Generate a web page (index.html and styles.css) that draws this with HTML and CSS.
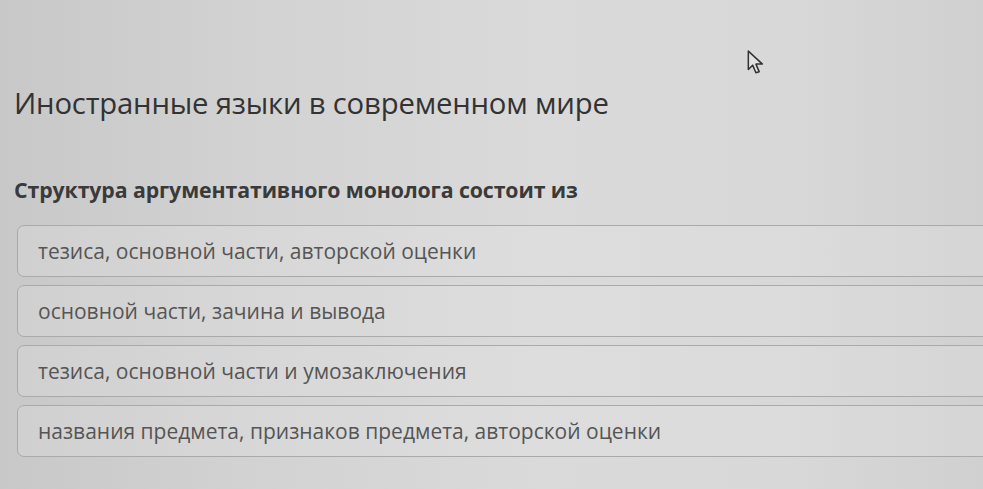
FILE: index.html
```html
<!DOCTYPE html>
<html lang="ru">
<head>
<meta charset="utf-8">
<link rel="stylesheet" href="styles.css">
</head>
<body>
<div class="page">
  <h1 class="title">Иностранные языки в современном мире</h1>
  <h2 class="question">Структура аргументативного монолога состоит из</h2>
  <div class="options">
    <div class="option">тезиса, основной части, авторской оценки</div>
    <div class="option">основной части, зачина и вывода</div>
    <div class="option">тезиса, основной части и умозаключения</div>
    <div class="option">названия предмета, признаков предмета, авторской оценки</div>
  </div>
</div>
<svg class="cursor" width="22" height="26" viewBox="0 0 20 24">
  <path d="M2 1 L2 18 L6 14 L9 21 L12 20 L9 13 L15 13 Z" fill="#e2e2e2" stroke="#333" stroke-width="1.4" stroke-linejoin="round"/>
</svg>
</body>
</html>
```
FILE: styles.css
```css
html, body {
  margin: 0;
  padding: 0;
}
body {
  width: 983px;
  height: 489px;
  overflow: hidden;
  position: relative;
  font-family: "Open Sans", "Noto Sans", sans-serif;
  background: linear-gradient(90deg, #c8c8c8 0%, #d2d2d2 25%, #dadada 55%, #d8d8d8 80%, #d0d0d0 100%);
}
.page {
  padding: 84px 0 0 14px;
}
.title {
  margin: 0;
  font-weight: 400;
  font-size: 29.3px;
  line-height: 38px;
  color: #333;
  letter-spacing: -0.2px;
}
.question {
  margin: 54px 0 0 0;
  font-weight: 700;
  font-size: 21.3px;
  line-height: 28px;
  color: #3a3a3a;
  letter-spacing: -0.1px;
}
.options {
  margin: 21px 0 0 3px;
  display: flex;
  flex-direction: column;
  gap: 8px;
}
.option {
  height: 52px;
  box-sizing: border-box;
  width: 990px;
  border: 1.5px solid #aaa;
  border-radius: 7px;
  padding: 0 0 0 20px;
  display: flex;
  align-items: center;
  font-size: 21px;
  color: #555;
  background: rgba(230,230,230,0.25);
}
.cursor {
  position: absolute;
  left: 746px;
  top: 50px;
}
```
